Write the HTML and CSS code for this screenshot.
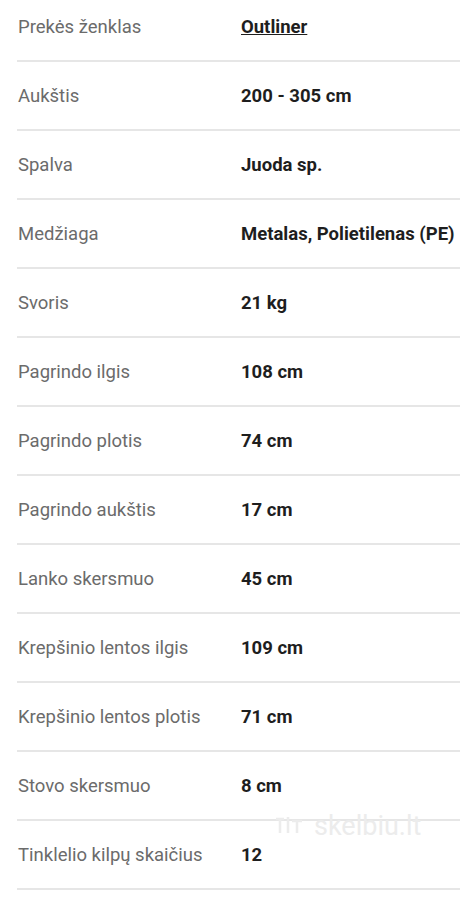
FILE: index.html
```html
<!DOCTYPE html>
<html lang="lt">
<head>
  <meta charset="UTF-8">
  <title>Prekės savybės</title>
  <link rel="stylesheet" href="styles.css">
</head>
<body>

  <div class="specs">
    <div class="spec-row">
      <span class="spec-label">Prekės ženklas</span>
      <a class="spec-value brand" href="#">Outliner</a>
    </div>
    <div class="spec-row">
      <span class="spec-label">Aukštis</span>
      <span class="spec-value">200 - 305 cm</span>
    </div>
    <div class="spec-row">
      <span class="spec-label">Spalva</span>
      <span class="spec-value">Juoda sp.</span>
    </div>
    <div class="spec-row">
      <span class="spec-label">Medžiaga</span>
      <span class="spec-value">Metalas, Polietilenas (PE)</span>
    </div>
    <div class="spec-row">
      <span class="spec-label">Svoris</span>
      <span class="spec-value">21 kg</span>
    </div>
    <div class="spec-row">
      <span class="spec-label">Pagrindo ilgis</span>
      <span class="spec-value">108 cm</span>
    </div>
    <div class="spec-row">
      <span class="spec-label">Pagrindo plotis</span>
      <span class="spec-value">74 cm</span>
    </div>
    <div class="spec-row">
      <span class="spec-label">Pagrindo aukštis</span>
      <span class="spec-value">17 cm</span>
    </div>
    <div class="spec-row">
      <span class="spec-label">Lanko skersmuo</span>
      <span class="spec-value">45 cm</span>
    </div>
    <div class="spec-row">
      <span class="spec-label">Krepšinio lentos ilgis</span>
      <span class="spec-value">109 cm</span>
    </div>
    <div class="spec-row">
      <span class="spec-label">Krepšinio lentos plotis</span>
      <span class="spec-value">71 cm</span>
    </div>
    <div class="spec-row">
      <span class="spec-label">Stovo skersmuo</span>
      <span class="spec-value">8 cm</span>
    </div>
    <div class="spec-row">
      <span class="spec-label">Tinklelio kilpų skaičius</span>
      <span class="spec-value">12</span>
    </div>
  </div>

  <div class="watermark">
    <svg width="34" height="22" viewBox="0 0 34 22">
      <g fill="none" stroke="#ececec" stroke-width="2.5">
        <path d="M4 4h8M8 4v14M16 2v16M20 6h10M25 6v12"/>
      </g>
    </svg>
    <span>skelbiu.lt</span>
  </div>

</body>
</html>
```

FILE: styles.css
```css
* {
  box-sizing: border-box;
  font-family: Roboto, 'Liberation Sans', sans-serif;
}

body {
  background-color: #fff;
  margin: 0;
  padding: 0;
  position: relative;
  overflow: hidden;
}

.specs {
  margin-top: -7px;
  padding: 0 9px 0 17px;
}

.spec-row {
  display: grid;
  grid-template-columns: 224px 1fr;
  align-items: center;
  height: 69px;
  border-bottom: 2px solid #e6e6e6;
  font-size: 18.5px;
}

.spec-label {
  padding-left: 1px;
  color: #6b6b6b;
}

.spec-value {
  font-weight: 700;
  color: #1e1e1e;
  white-space: nowrap;
}

.brand {
  text-decoration: underline;
}

.watermark {
  position: absolute;
  left: 272px;
  top: 810px;
  display: flex;
  align-items: center;
  gap: 8px;
  color: #ececec;
  font-size: 27px;
}
```
